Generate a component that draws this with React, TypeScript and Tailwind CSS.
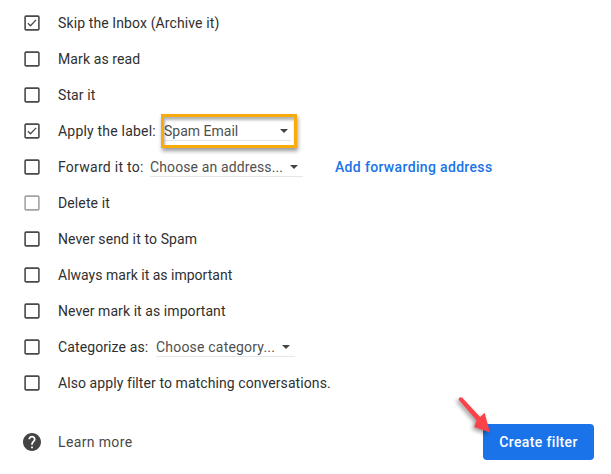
import type { ReactNode } from 'react'

interface CheckboxProps {
  checked?: boolean
  disabled?: boolean
}

function Checkbox({ checked, disabled }: CheckboxProps) {
  return (
    <svg
      role="checkbox"
      aria-checked={!!checked}
      className={disabled ? 'w-4 h-4 shrink-0 text-[#a3a3a3]' : 'w-4 h-4 shrink-0 text-[#4a4a4a]'}
      viewBox="0 0 16 16"
      fill="none"
      stroke="currentColor"
    >
      <rect x="1.1" y="1.1" width="13.8" height="13.8" rx="1" strokeWidth="1.6" />
      {checked && <path d="M3.9 8.3l2.6 2.5 5.6-5.9" strokeWidth="1.3" />}
    </svg>
  )
}

function Caret() {
  return (
    <svg className="w-2 h-1 shrink-0" viewBox="0 0 8 4" fill="#444444">
      <path d="M0 0h8L4 4z" />
    </svg>
  )
}

interface SelectProps {
  children: ReactNode
  className: string
}

function Select({ children, className }: SelectProps) {
  return (
    <div className={`relative flex items-center justify-between h-[19px] border-b border-[#e4e7ea] text-[#505050] ${className}`}>
      {children}
      <Caret />
    </div>
  )
}

interface OptionRowProps extends CheckboxProps {
  label: string
  spacing?: string
  children?: ReactNode
}

function OptionRow({ label, spacing = 'tracking-[0.11px]', checked, disabled, children }: OptionRowProps) {
  return (
    <div className="flex items-center h-9 pl-6">
      <Checkbox checked={checked} disabled={disabled} />
      <span className={`ml-[18px] ${spacing}`}>{label}</span>
      {children}
    </div>
  )
}

export default function App() {
  return (
    <div className="w-[611px] h-[474px] bg-white overflow-hidden pt-[5px] font-['Roboto',sans-serif] text-[14px] leading-[18px] text-[#303030] whitespace-nowrap">
      <OptionRow label="Skip the Inbox (Archive it)" checked />
      <OptionRow label="Mark as read" />
      <OptionRow label="Star it" />
      <OptionRow label="Apply the label:" spacing="tracking-[0.2px]" checked>
        <div className="relative ml-auto mr-[320px]">
          <Select className="w-[127px] pr-[3px]">Spam Email</Select>
          {/* Highlight around the label picker */}
          <div className="absolute -left-[3px] -top-[8px] w-[136px] h-[34px] border-[3px] border-[#f9ab0b] shadow-[1px_3px_4px_rgba(0,0,0,0.4),inset_1px_3px_3px_rgba(0,0,0,0.3)]" />
        </div>
      </OptionRow>
      <OptionRow label="Forward it to:" spacing="tracking-[0.27px]">
        <div className="flex items-center ml-auto mr-[118px]">
          <Select className="w-[153px] pr-[5px] tracking-[0.12px]">Choose an address...</Select>
          <a className="ml-8 w-[158px] font-medium tracking-[0.34px] text-[#1a73e8]">Add forwarding address</a>
        </div>
      </OptionRow>
      <OptionRow label="Delete it" disabled />
      <OptionRow label="Never send it to Spam" />
      <OptionRow label="Always mark it as important" spacing="tracking-[0.01px]" />
      <OptionRow label="Never mark it as important" spacing="tracking-[0.07px]" />
      <OptionRow label="Categorize as:">
        <Select className="w-[139px] pr-[5px] ml-auto mr-[316px] tracking-[0.2px]">Choose category...</Select>
      </OptionRow>
      <OptionRow label="Also apply filter to matching conversations." spacing="tracking-[0.08px]" />

      <div className="flex items-center h-9 mt-[23px] pl-[23px] pr-[17px]">
        <svg className="w-[18px] h-[18px]" viewBox="2 2 20 20" fill="#444444">
          <path d="M12 2C6.48 2 2 6.48 2 12s4.48 10 10 10 10-4.48 10-10S17.52 2 12 2zm1 17h-2v-2h2v2zm2.07-7.75l-.9.92C13.45 12.9 13 13.5 13 15h-2v-.5c0-1.1.45-2.1 1.17-2.83l1.24-1.26c.37-.36.59-.86.59-1.41 0-1.1-.9-2-2-2s-2 .9-2 2H8c0-2.21 1.79-4 4-4s4 1.79 4 4c0 .88-.36 1.68-.93 2.25z" />
        </svg>
        <span className="ml-[17px] tracking-[0.36px] text-[#484848]">Learn more</span>
        <button className="relative ml-auto w-[111px] h-9 rounded-[4px] bg-[#1a73e8] font-medium tracking-[0.36px] text-white">
          Create filter
          <svg
            className="absolute -left-[29px] -top-[31px] w-12 h-12 drop-shadow-[-2px_2px_2px_rgba(0,0,0,0.4)]"
            viewBox="0 0 48 48"
            fill="#fa4248"
          >
            <path d="M5.1 7.3Q4.3 5.8 5.5 4.7Q7 3.6 8.3 4.7L26.2 24.1L30.6 19.7L36 39.5L20.2 33.9L22.6 27.5z" />
          </svg>
        </button>
      </div>
    </div>
  )
}
